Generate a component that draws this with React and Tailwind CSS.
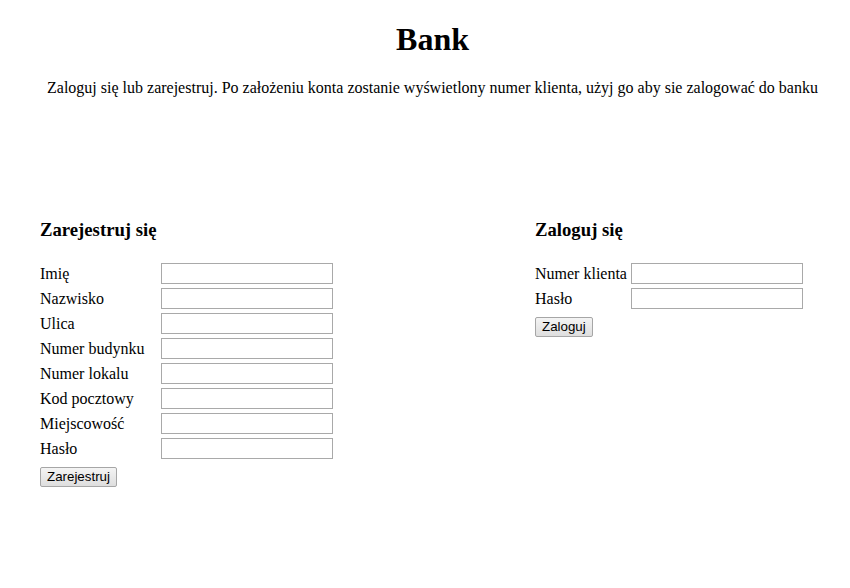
const registerFields = [
  'Imię',
  'Nazwisko',
  'Ulica',
  'Numer budynku',
  'Numer lokalu',
  'Kod pocztowy',
  'Miejscowość',
  'Hasło',
];

const loginFields = ['Numer klienta', 'Hasło'];

const Field = ({ label, type }) => (
  <>
    <label className="leading-[18px]">{label}</label>
    <input
      type={type}
      className="w-[172px] h-[21px] border border-[#a9a9a9] bg-white px-[2px] text-[13px] outline-none"
    />
  </>
);

const Button = ({ children }) => (
  <button className="mt-[8px] h-[20px] px-[6px] border border-[#a6a6a6] rounded-[2px] bg-gradient-to-b from-[#f4f4f4] to-[#dedede] text-[13.33px] leading-[16px] text-black font-['Liberation_Sans',Arial,sans-serif] self-start">
    {children}
  </button>
);

export default function App() {
  return (
    <div className="min-h-screen bg-white text-black font-['Liberation_Serif','Times_New_Roman',serif] text-[16px] pt-[21px]">
      <h1 className="pl-[15px] text-center text-[32px] leading-[37px] font-bold">Bank</h1>
      <p className="pl-[15px] mt-[21px] text-center leading-[18px]">
        Zaloguj się lub zarejestruj. Po założeniu konta zostanie wyświetlony numer klienta, użyj go aby sie zalogować do banku
      </p>

      <div className="flex mt-[122px] pl-[40px]">
        <div className="w-[495px] flex flex-col">
          <h3 className="text-[18.72px] leading-[21px] font-bold">Zarejestruj się</h3>
          <div className="mt-[23px] grid grid-cols-[121px_172px] gap-y-[4px] items-center">
            {registerFields.map((f) => (
              <Field key={f} label={f} type={f === 'Hasło' ? 'password' : 'text'} />
            ))}
          </div>
          <Button>Zarejestruj</Button>
        </div>

        <div className="flex flex-col">
          <h3 className="text-[18.72px] leading-[21px] font-bold">Zaloguj się</h3>
          <div className="mt-[23px] grid grid-cols-[96px_172px] gap-y-[4px] items-center">
            {loginFields.map((f) => (
              <Field key={f} label={f} type={f === 'Hasło' ? 'password' : 'text'} />
            ))}
          </div>
          <Button>Zaloguj</Button>
        </div>
      </div>
    </div>
  );
}
